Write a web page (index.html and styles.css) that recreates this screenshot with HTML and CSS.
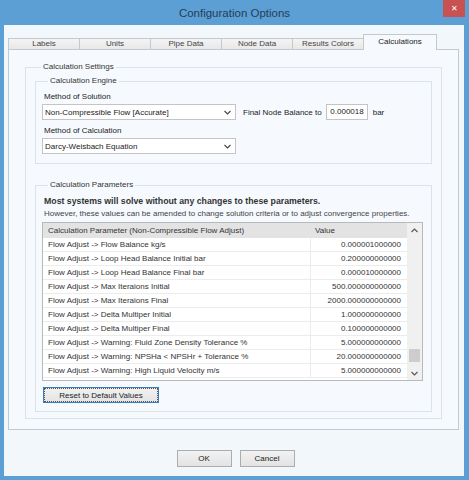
FILE: index.html
```html
<!DOCTYPE html>
<html lang="en">
<head>
<meta charset="UTF-8">
<title>Configuration Options</title>
<link rel="stylesheet" href="styles.css">
</head>
<body>
<div class="window">
    <div class="titlebar">
        <div class="title">Configuration Options</div>
        <div class="close">&#x2715;</div>
    </div>
    <div class="client">
        <div class="tabs">
            <div class="tab">Labels</div>
            <div class="tab">Units</div>
            <div class="tab">Pipe Data</div>
            <div class="tab">Node Data</div>
            <div class="tab">Results Colors</div>
            <div class="tab active">Calculations</div>
        </div>
        <div class="panel">
            <fieldset class="group outer">
                <legend>Calculation Settings</legend>

                <fieldset class="group engine">
                    <legend>Calculation Engine</legend>
                    <div class="field-label">Method of Solution</div>
                    <div class="row">
                        <div class="select wide">
                            <span>Non-Compressible Flow [Accurate]</span>
                            <svg width="7" height="5" viewBox="0 0 7 5"><path d="M0.5 1 L3.5 4 L6.5 1" fill="none" stroke="#444" stroke-width="1.1"/></svg>
                        </div>
                        <span class="inline-label">Final Node Balance to</span>
                        <div class="textbox">0.000018</div>
                        <span class="unit">bar</span>
                    </div>
                    <div class="field-label">Method of Calculation</div>
                    <div class="row last">
                        <div class="select wide">
                            <span>Darcy-Weisbach Equation</span>
                            <svg width="7" height="5" viewBox="0 0 7 5"><path d="M0.5 1 L3.5 4 L6.5 1" fill="none" stroke="#444" stroke-width="1.1"/></svg>
                        </div>
                    </div>
                </fieldset>

                <fieldset class="group params">
                    <legend>Calculation Parameters</legend>
                    <p class="note-bold">Most systems will solve without any changes to these parameters.</p>
                    <p class="note">However, these values can be amended to change solution criteria or to adjust convergence properties.</p>
                    <div class="grid">
                        <table>
                            <thead>
                                <tr><th>Calculation Parameter (Non-Compressible Flow Adjust)</th><th class="val-h">Value</th></tr>
                            </thead>
                            <tbody>
                                <tr><td>Flow Adjust -&gt; Flow Balance kg/s</td><td class="val">0.000001000000</td></tr>
                                <tr><td>Flow Adjust -&gt; Loop Head Balance Initial bar</td><td class="val">0.200000000000</td></tr>
                                <tr><td>Flow Adjust -&gt; Loop Head Balance Final bar</td><td class="val">0.000010000000</td></tr>
                                <tr><td>Flow Adjust -&gt; Max Iteraions Initial</td><td class="val">500.000000000000</td></tr>
                                <tr><td>Flow Adjust -&gt; Max Iteraions Final</td><td class="val">2000.000000000000</td></tr>
                                <tr><td>Flow Adjust -&gt; Delta Multiper Initial</td><td class="val">1.000000000000</td></tr>
                                <tr><td>Flow Adjust -&gt; Delta Multiper Final</td><td class="val">0.100000000000</td></tr>
                                <tr><td>Flow Adjust -&gt; Warning: Fluid Zone Density Tolerance %</td><td class="val">5.000000000000</td></tr>
                                <tr><td>Flow Adjust -&gt; Warning: NPSHa &lt; NPSHr + Tolerance %</td><td class="val">20.000000000000</td></tr>
                                <tr><td>Flow Adjust -&gt; Warning: High Liquid Velocity m/s</td><td class="val">5.000000000000</td></tr>
                            </tbody>
                        </table>
                        <div class="scrollbar">
                            <svg width="7" height="5" viewBox="0 0 7 5"><path d="M0.5 4 L3.5 1 L6.5 4" fill="none" stroke="#555" stroke-width="1.1"/></svg>
                            <div class="track"><div class="thumb"></div></div>
                            <svg width="7" height="5" viewBox="0 0 7 5"><path d="M0.5 1 L3.5 4 L6.5 1" fill="none" stroke="#555" stroke-width="1.1"/></svg>
                        </div>
                    </div>
                    <button class="btn reset">Reset to Default Values</button>
                </fieldset>
            </fieldset>
        </div>
        <div class="actions">
            <button class="btn">OK</button>
            <button class="btn">Cancel</button>
        </div>
    </div>
</div>
</body>
</html>
```

FILE: styles.css
```css
body{
    margin:0;
    background:#5c9fd5;
    font-family:"Liberation Sans",Arial,sans-serif;
    font-size:8px;
    color:#222;
}
.window{
    width:469px;
    height:480px;
    display:flex;
    flex-direction:column;
}
.titlebar{
    height:25px;
    display:flex;
    align-items:flex-start;
}
.title{
    flex:1;
    padding-left:26px;
    text-align:center;
    font-size:11.5px;
    line-height:26px;
    color:#263d55;
}
.close{
    width:22px;
    height:17px;
    margin-right:4px;
    background:#c85251;
    color:#fff;
    font-size:8px;
    display:flex;
    align-items:center;
    justify-content:center;
}
.client{
    flex:1;
    margin:0 5px 4px 4px;
    background:#f2f7fc;
    display:flex;
    flex-direction:column;
}
.tabs{
    display:flex;
    align-items:flex-end;
    margin:9px 0 0 4px;
    height:15px;
}
.tab{
    width:72px;
    height:11px;
    margin-right:-1px;
    box-sizing:border-box;
    border:1px solid #c5c9cd;
    border-bottom:none;
    background:linear-gradient(#f4f4f4,#e8e8e8);
    text-align:center;
    line-height:10px;
    color:#444;
}
.tab.active{
    width:74px;
    height:16px;
    margin-bottom:-1px;
    background:#f6fafe;
    line-height:13px;
    color:#222;
    position:relative;
    z-index:1;
}
.panel{
    margin:0 5px 0 4px;
    border:1px solid #c5c9cd;
    background:#f6fafe;
    padding:12px 16px 10px 16px;
}
.group{
    margin:0;
    padding:0;
    border:1px solid #dbe3e8;
    min-width:0;
}
.group legend{
    margin-left:6px;
    padding:0 2px;
    line-height:10px;
    color:#333;
}
.outer{
    padding:4px 9px 6px 9px;
}
.engine{
    padding:4px 6px 9px 6px;
}
.params{
    margin-top:16px;
    padding:1px 6px 8px 6px;
}
.field-label{
    margin:2px 0 2px 2px;
    line-height:10px;
}
.row{
    display:flex;
    align-items:center;
    margin-bottom:6px;
}
.row.last{margin-bottom:0;}
.select{
    box-sizing:border-box;
    height:16px;
    border:1px solid #c4c4c4;
    background:#fff;
    display:flex;
    align-items:center;
    justify-content:space-between;
    padding:0 4px 0 2px;
}
.select.wide{width:194px;}
.inline-label{margin-left:7px;}
.textbox{
    box-sizing:border-box;
    width:42px;
    height:16px;
    margin-left:4px;
    border:1px solid #c4c4c4;
    background:#fff;
    text-align:right;
    padding-right:3px;
    line-height:14px;
}
.unit{margin-left:5px;}
.note-bold{
    margin:4px 0 0 2px;
    font-size:8.75px;
    font-weight:bold;
    line-height:12px;
    color:#333;
}
.note{
    margin:2px 0 3px 2px;
    line-height:10px;
    color:#444;
}
.grid{
    display:flex;
    width:381px;
    height:159px;
    box-sizing:border-box;
    border:1px solid #b9b9b9;
    background:#fff;
}
table{
    flex:1;
    border-collapse:collapse;
    align-self:flex-start;
}
th{
    height:15px;
    padding:0 0 0 5px;
    background:#e3e3e3;
    font-weight:normal;
    text-align:left;
    color:#333;
}
th.val-h{
    width:92px;
    padding-left:4px;
    border-left:1px solid #e3e3e3;
}
td{
    height:13px;
    padding:0 0 0 5px;
    border-bottom:1px solid #ececec;
    color:#333;
}
td.val{
    text-align:right;
    padding:0 6px 0 0;
    border-left:1px solid #ececec;
}
.scrollbar{
    width:15px;
    background:#f0f0f0;
    display:flex;
    flex-direction:column;
    align-items:center;
    padding:5px 0 4px;
    box-sizing:border-box;
}
.track{
    flex:1;
    width:100%;
    display:flex;
    flex-direction:column;
    justify-content:flex-end;
    padding-bottom:9px;
    box-sizing:border-box;
}
.thumb{
    height:13px;
    margin:0 2px;
    background:#cdcdcd;
}
.btn{
    font-family:inherit;
    font-size:8px;
    color:#222;
    height:17px;
    padding:0;
    border:1px solid #adadad;
    background:linear-gradient(#f2f2f2,#e3e3e3);
}
.reset{
    display:block;
    width:116px;
    height:16px;
    margin:6px 0 0 1px;
    border:1px solid #3d7bbf;
    outline:1px dotted #555;
    outline-offset:-2px;
}
.actions{
    display:flex;
    justify-content:center;
    gap:8px;
    margin-top:20px;
    padding-left:3px;
}
.actions .btn{width:55px;}
```
